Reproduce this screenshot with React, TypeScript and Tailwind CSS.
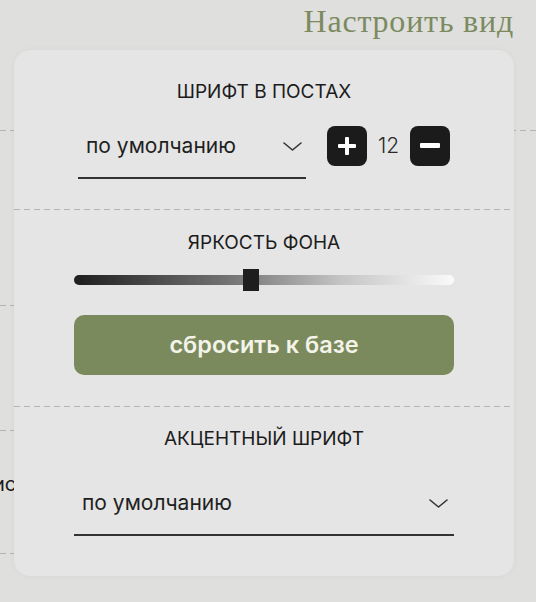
const font = { fontFamily: "Inter, 'Noto Sans', sans-serif" };

function Dashed() {
  return <div className="h-px w-full bg-[repeating-linear-gradient(to_right,#b4b4b4_0_6px,transparent_6px_10px)]" />;
}

function Chevron() {
  return (
    <svg width="19" height="9" viewBox="0 0 19 9" fill="none">
      <polyline points="1,1 9.5,8 18,1" stroke="#333" strokeWidth="1.6" strokeLinecap="round" strokeLinejoin="round" />
    </svg>
  );
}

function Select({ className, textPad }: { className: string; textPad: string }) {
  return (
    <div className={`flex h-[53px] items-start border-b-2 border-[#333] ${className}`}>
      <div className={`flex h-10 w-full items-center justify-between ${textPad}`}>
        <span className="text-[21px] text-[#1f1f1f]">по умолчанию</span>
        <Chevron />
      </div>
    </div>
  );
}

function Heading({ children }: { children: string }) {
  return <h3 className="text-center text-[19px] leading-6 text-[#1c1c1c]">{children}</h3>;
}

export default function App() {
  return (
    <div className="relative h-[602px] w-[536px] overflow-hidden bg-[#dfdfdd]" style={font}>
      {/* page behind the popover */}
      <div className="flex justify-end pr-[22px] pt-[1px]">
        <h1 className="text-[32px] leading-[40px] tracking-[0.8px] text-[#7b8a60]" style={{ fontFamily: "'Liberation Serif', Georgia, serif" }}>
          Настроить вид
        </h1>
      </div>
      <div className="mt-[89px]">
        <Dashed />
      </div>
      <div className="w-[480px]">
        <div className="mt-[174px]"><Dashed /></div>
        <div className="mt-[124px]"><Dashed /></div>
        <div className="mt-[38px] -ml-[7px] text-[20px] text-[#1a1a1a]">история</div>
        <div className="mt-[54px]"><Dashed /></div>
      </div>

      {/* popover */}
      <div className="absolute left-[14px] top-[50px] flex w-[500px] flex-col rounded-2xl bg-[#e5e5e5] pt-[30px] pb-[40px] shadow-[0_0_6px_rgba(0,0,0,0.04)]">
        <Heading>ШРИФТ В ПОСТАХ</Heading>
        <div className="mt-[22px] flex items-start justify-center">
          <Select className="w-[228px]" textPad="pl-2 pr-[4px]" />
          <div className="ml-[21px] flex h-10 items-center">
            <button className="flex h-10 w-10 items-center justify-center rounded-lg bg-[#1b1b1b]">
              <svg width="18" height="18" viewBox="0 0 18 18">
                <rect x="7" y="0" width="4" height="18" rx="1" fill="#fff" />
                <rect x="0" y="7" width="18" height="4" rx="1" fill="#fff" />
              </svg>
            </button>
            <span className="w-[43px] text-center text-[21px] font-light text-[#2a2a2a]">12</span>
            <button className="flex h-10 w-10 items-center justify-center rounded-lg bg-[#1b1b1b]">
              <svg width="20" height="6" viewBox="0 0 20 6">
                <rect x="0" y="0" width="20" height="5" rx="1" fill="#fff" />
              </svg>
            </button>
          </div>
        </div>
        <div className="mt-[30px]"><Dashed /></div>

        <div className="mt-[21px]"><Heading>ЯРКОСТЬ ФОНА</Heading></div>
        <div className="relative mx-[60px] mt-[14px] flex h-[22px] items-center">
          <div className="h-[10px] w-full rounded-full bg-[linear-gradient(to_right,#1e1e1e,#7d7d7d_45%,#c4c4c4_70%,#fafafa)]" />
          <div className="absolute left-[169px] top-0 h-[22px] w-4 bg-[#1e1e1e]" />
        </div>
        <button className="mx-[60px] mt-6 h-[60px] rounded-[10px] bg-[#7a8a5c] text-[23.5px] font-semibold text-[#f3f3ea]">
          сбросить к базе
        </button>
        <div className="mt-[31px]"><Dashed /></div>

        <div className="mt-5"><Heading>АКЦЕНТНЫЙ ШРИФТ</Heading></div>
        <div className="mt-8 flex justify-center">
          <Select className="w-[380px]" textPad="pl-2 pr-[6px]" />
        </div>
      </div>
    </div>
  );
}
